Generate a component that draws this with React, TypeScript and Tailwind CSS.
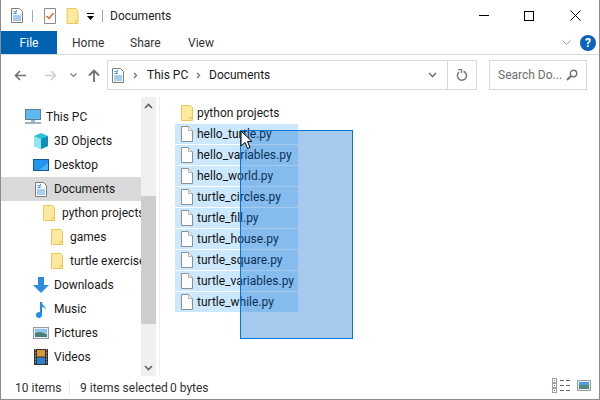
import React from "react";

const Folder = ({ w = 12, h = 16 }: { w?: number; h?: number }) => (
  <svg width={w} height={h} viewBox="0 0 12 16" className="shrink-0">
    <path d="M.5.5h9l2 2v13H.5z" fill="#fde9a0" stroke="#ecc75a" />
    <path d="M9 15.5v-3h2.5" fill="#fde9a0" stroke="#ecc75a" />
  </svg>
);

const DocIcon = () => (
  <svg width="12" height="15" viewBox="0 0 12 15" className="shrink-0">
    <path d="M.5.5h8l3 3v11H.5z" fill="#fff" stroke="#7c7c7c" />
    <path d="M2.5 3.5h2M2.5 5.5h3" stroke="#2f8fe0" />
    <path d="M5.5 2L4.5 6" stroke="#2f8fe0" />
    <path d="M2 8h8M2 10h8M2 12h8" stroke="#4b9ad8" />
  </svg>
);

const FileIcon = () => (
  <svg width="12" height="16" viewBox="0 0 12 16" className="shrink-0">
    <path d="M.5.5h7l4 4v11H.5z" fill="#fdfdfd" stroke="#8f8f8f" />
    <path d="M7.5.5v4h4" fill="#f0f0f0" stroke="#b5b5b5" />
  </svg>
);

const Pc = () => (
  <svg width="16" height="16" viewBox="0 0 16 16">
    <rect x=".5" y=".5" width="15" height="10" fill="#5fb8f0" stroke="#5a7d96" />
    <rect x="6" y="11" width="4" height="2" fill="#9db4c4" />
    <rect y="13" width="16" height="2" fill="#9db4c4" />
  </svg>
);
const Cube = () => (
  <svg width="16" height="16" viewBox="0 0 16 16">
    <path d="M8 0l7 3v10l-7 3-7-3V3z" fill="#2ac3d6" />
    <path d="M8 6l7-3v10l-7 3z" fill="#0f8fb8" />
    <path d="M8 6L1 3v10l7 3z" fill="#8fe6ef" />
  </svg>
);
const Desk = () => (
  <svg width="16" height="13" viewBox="0 0 16 13">
    <rect width="16" height="12" fill="#16578f" />
    <rect x="1" y="1" width="14" height="10" fill="#1f95ee" />
    <path d="M15 4L6 11h9z" fill="#4ab2f5" />
  </svg>
);
const Dl = () => (
  <svg width="16" height="16" viewBox="0 0 16 16">
    <path d="M5 0h6v8h5l-8 8-8-8h5z" fill="#2f8bdc" />
  </svg>
);
const Note = () => (
  <svg width="12" height="17" viewBox="0 0 12 17">
    <path d="M5 1h2c0 4 4 4 4 8-1-2-2-3-4-3v8a3 3 0 1 1-2-2.8z" fill="#1f8eea" />
  </svg>
);
const Pic = () => (
  <svg width="16" height="12" viewBox="0 0 16 12">
    <rect x=".5" y=".5" width="15" height="11" fill="#dfeef8" stroke="#9a9a9a" />
    <rect x="2" y="2" width="12" height="4" fill="#8fc3ea" />
    <path d="M2 6l5-1 7 2v3H2z" fill="#4d7f7a" />
  </svg>
);
const Vid = () => (
  <svg width="14" height="16" viewBox="0 0 14 16">
    <rect width="14" height="16" fill="#333" />
    <rect x="3" y="1" width="8" height="6.5" fill="#d99a35" />
    <rect x="3" y="8.5" width="8" height="6.5" fill="#2f7fd0" />
    <path d="M1 1h1M1 4h1M1 7h1M1 10h1M1 13h1M12 1h1M12 4h1M12 7h1M12 10h1M12 13h1" stroke="#ddd" />
  </svg>
);

const Chevron = ({ up = false }: { up?: boolean }) => (
  <svg width="9" height="6" viewBox="0 0 9 6" className={up ? "rotate-180" : ""}>
    <path d="M1 1l3.5 3.5L8 1" fill="none" stroke="#606060" strokeWidth="1.6" />
  </svg>
);

const Small = () => (
  <svg width="5" height="7" viewBox="0 0 5 7" className="shrink-0">
    <path d="M1 1l2.5 2.5L1 6" fill="none" stroke="#777" strokeWidth="1.4" />
  </svg>
);

const navItems: { label: string; icon: React.ReactNode; pad: string; w: string; sel?: boolean }[] = [
  { label: "This PC", icon: <Pc />, pad: "pl-[24px]", w: "w-[21px]" },
  { label: "3D Objects", icon: <Cube />, pad: "pl-[32px]", w: "w-[21px]" },
  { label: "Desktop", icon: <Desk />, pad: "pl-[32px]", w: "w-[21px]" },
  { label: "Documents", icon: <DocIcon />, pad: "pl-[34px]", w: "w-[19px]", sel: true },
  { label: "python projects", icon: <Folder />, pad: "pl-[42px]", w: "w-[19px]" },
  { label: "games", icon: <Folder />, pad: "pl-[50px]", w: "w-[19px]" },
  { label: "turtle exercises", icon: <Folder />, pad: "pl-[50px]", w: "w-[19px]" },
  { label: "Downloads", icon: <Dl />, pad: "pl-[32px]", w: "w-[21px]" },
  { label: "Music", icon: <Note />, pad: "pl-[34px]", w: "w-[19px]" },
  { label: "Pictures", icon: <Pic />, pad: "pl-[32px]", w: "w-[21px]" },
  { label: "Videos", icon: <Vid />, pad: "pl-[33px]", w: "w-[20px]" },
];

const files = [
  "hello_turtle.py",
  "hello_variables.py",
  "hello_world.py",
  "turtle_circles.py",
  "turtle_fill.py",
  "turtle_house.py",
  "turtle_square.py",
  "turtle_variables.py",
  "turtle_while.py",
];

export default function App() {
  return (
    <div
      className="relative w-[600px] h-[400px] bg-white flex flex-col border-x border-b border-[#8c8c8c] overflow-hidden whitespace-nowrap text-[12px] text-[#1a1a1a]"
      style={{ fontFamily: "Roboto, sans-serif" }}
    >
      {/* title bar */}
      <div className="h-[31px] shrink-0 flex items-center">
        <div className="ml-[10px] flex items-center">
          <DocIcon />
          <div className="ml-[9px] w-px h-[12px] bg-[#a8a8a8]" />
          <svg width="12" height="16" viewBox="0 0 12 16" className="ml-[11px]">
            <path d="M.5.5h11v15H.5z" fill="#fff" stroke="#8a8a8a" />
            <path d="M2.5 8l2.5 2.5L9.5 5" fill="none" stroke="#e0672c" strokeWidth="1.5" />
          </svg>
          <div className="ml-[10px]"><Folder w={13} /></div>
          <svg width="8" height="8" viewBox="0 0 8 8" className="ml-[8px] mt-[2px]">
            <path d="M0 0h7v1H0z" fill="#000" />
            <path d="M0 3h7L3.5 7z" fill="#000" />
          </svg>
          <div className="ml-[7px] w-px h-[12px] bg-[#a8a8a8]" />
          <span className="ml-[7px] text-[#222]">Documents</span>
        </div>
        <div className="ml-auto flex items-center mr-[18px]">
          <div className="w-[10px] h-px bg-black" />
          <div className="ml-[35px] w-[10px] h-[10px] border border-black" />
          <svg width="11" height="11" viewBox="0 0 11 11" className="ml-[36px]">
            <path d="M.5.5l10 10M10.5.5l-10 10" stroke="#000" />
          </svg>
        </div>
      </div>

      {/* ribbon tabs */}
      <div className="h-[24px] shrink-0 flex items-stretch border-b border-[#dadada]">
        <div className="w-[56px] h-[23px] bg-[#0063b1] text-white flex items-center justify-center">File</div>
        <div className="flex items-center pl-[15px] text-[#333] h-[23px]">
          <span className="w-[58px]">Home</span>
          <span className="w-[58px]">Share</span>
          <span>View</span>
        </div>
        <div className="ml-auto flex items-center pr-[3px] h-[23px]">
          <svg width="9" height="6" viewBox="0 0 9 6">
            <path d="M.5.5l4 4 4-4" fill="none" stroke="#a0a0a0" />
          </svg>
          <div className="ml-[9px] w-[16px] h-[16px] rounded-full bg-[#0c62b8] text-white font-bold text-[12px] flex items-center justify-center">?</div>
        </div>
      </div>

      {/* address row */}
      <div className="h-[42px] shrink-0 flex items-center pb-[2px]">
        <svg width="13" height="11" viewBox="0 0 13 11" className="ml-[13px]">
          <path d="M12 5.5H2M6 1L1.5 5.5 6 10" fill="none" stroke="#707070" strokeWidth="1.6" />
        </svg>
        <svg width="13" height="11" viewBox="0 0 13 11" className="ml-[17px]">
          <path d="M1 5.5h10M7 1l4.5 4.5L7 10" fill="none" stroke="#d0d0d0" strokeWidth="1.6" />
        </svg>
        <svg width="7" height="5" viewBox="0 0 7 5" className="ml-[13px]">
          <path d="M.5.5l3 3 3-3" fill="none" stroke="#808080" strokeWidth="1.2" />
        </svg>
        <svg width="12" height="13" viewBox="0 0 12 13" className="ml-[11px]">
          <path d="M6 13V2M1 6.5L6 1.5l5 5" fill="none" stroke="#707070" strokeWidth="1.8" />
        </svg>
        <div className="ml-[7px] w-[370px] h-[30px] border border-[#d9d9d9] flex items-center">
          <div className="ml-[4px]"><DocIcon /></div>
          <div className="ml-[9px]"><Small /></div>
          <span className="ml-[9px] w-[41px]">This PC</span>
          <div className="ml-[8px]"><Small /></div>
          <span className="ml-[8px]">Documents</span>
          <div className="ml-auto flex h-full items-stretch">
            <div className="w-[30px] flex items-center justify-center">
              <svg width="9" height="6" viewBox="0 0 9 6">
                <path d="M1 1l3.5 3.5L8 1" fill="none" stroke="#777" strokeWidth="1.6" />
              </svg>
            </div>
            <div className="w-[29px] border-l border-[#d9d9d9] flex items-center justify-center">
              <svg width="12" height="13" viewBox="0 0 12 13">
                <path d="M7.5 2.2A4.6 4.6 0 1 1 3 3" fill="none" stroke="#7a7a7a" strokeWidth="1.5" />
                <path d="M2 .5h3.5V4" fill="none" stroke="#7a7a7a" strokeWidth="1.3" />
              </svg>
            </div>
          </div>
        </div>
        <div className="ml-[12px] w-[98px] h-[30px] border border-[#d9d9d9] flex items-center pl-[8px] pr-[8px] text-[#6d6d6d]">
          <span>Search Do...</span>
          <svg width="12" height="12" viewBox="0 0 12 12" className="ml-auto">
            <circle cx="7.5" cy="4.5" r="3.2" fill="none" stroke="#707070" strokeWidth="1.4" />
            <path d="M5 7l-4 4" stroke="#707070" strokeWidth="2" />
          </svg>
        </div>
      </div>

      {/* main */}
      <div className="flex-1 min-h-0 flex">
        <div className="w-[140px] shrink-0 pt-[8px] overflow-hidden">
          {navItems.map((n) => (
            <div key={n.label} className={`h-[24px] flex items-center ${n.pad} ${n.sel ? "bg-[#d9d9d9]" : ""}`}>
              <div className={`${n.w} shrink-0 flex items-center`}>{n.icon}</div>
              <span>{n.label}</span>
            </div>
          ))}
        </div>
        <div className="w-[15px] shrink-0 bg-[#f0f0f0] flex flex-col items-center h-[279px]">
          <div className="h-[17px] flex items-center justify-center"><Chevron up /></div>
          <div className="h-[82px]" />
          <div className="h-[128px] w-full bg-[#cdcdcd]" />
          <div className="flex-1" />
          <div className="h-[17px] flex items-center justify-center"><Chevron /></div>
        </div>
        <div className="w-px h-[279px] ml-[3px] bg-[#f0f0f0]" />
        <div className="pl-[15px] pt-[5px]">
          <div className="ml-[6px] h-[21px] flex items-center">
            <Folder />
            <span className="ml-[4px]">python projects</span>
          </div>
          <div className="mt-px flex flex-col gap-px">
            {files.map((f) => (
              <div key={f} className="w-[123px] h-[20px] bg-[#cce8ff] flex items-center pl-[6px]">
                <FileIcon />
                <span className="ml-[4px] text-[#111]">{f}</span>
              </div>
            ))}
          </div>
        </div>
      </div>

      {/* status bar */}
      <div className="h-[27px] shrink-0 flex items-center text-[#333] pt-[4px]">
        <span className="ml-[14px] w-[45px]">10 items</span>
        <div className="ml-[9px] w-px h-[12px] bg-[#e6e6e6]" />
        <span className="ml-[10px] w-[84px]">9 items selected</span>
        <span className="ml-[6px]">0 bytes</span>
        <div className="ml-auto mr-[8px] mb-[4px] flex items-center">
          <div className="flex flex-col">
            {["#777", "#3b9ae0", "#e04040"].map((c) => (
              <div key={c} className="flex items-center">
                <div className="w-[5px] h-[5px] border border-[#a0a0a0] flex items-center justify-center">
                  <div className="w-px h-px" style={{ background: c }} />
                </div>
                <div className="ml-[3px] flex gap-[2px]">
                  <div className="w-[4px] h-px bg-[#666]" />
                  <div className="w-[4px] h-px bg-[#666]" />
                </div>
              </div>
            ))}
          </div>
          <svg width="14" height="11" viewBox="0 0 14 11" className="ml-[7px]">
            <rect x=".5" y=".5" width="13" height="10" fill="#dbeef9" stroke="#a0a0a0" />
            <rect x="2" y="2" width="10" height="3" fill="#4f9fe0" />
            <rect x="2" y="5" width="10" height="4" fill="#5a8a78" />
          </svg>
        </div>
      </div>

      {/* rubber band selection */}
      <div className="absolute left-[239px] top-[130px] w-[113px] h-[209px] border border-[#0078d7] bg-[#0066cc]/35" />
      {/* mouse cursor */}
      <svg width="13" height="20" viewBox="0 0 13 20" className="absolute left-[239px] top-[130px]">
        <path d="M1 1v15l4-3.5 2.5 6 2.5-1-2.5-6H12z" fill="#fff" stroke="#000" strokeWidth="1" />
      </svg>
    </div>
  );
}
